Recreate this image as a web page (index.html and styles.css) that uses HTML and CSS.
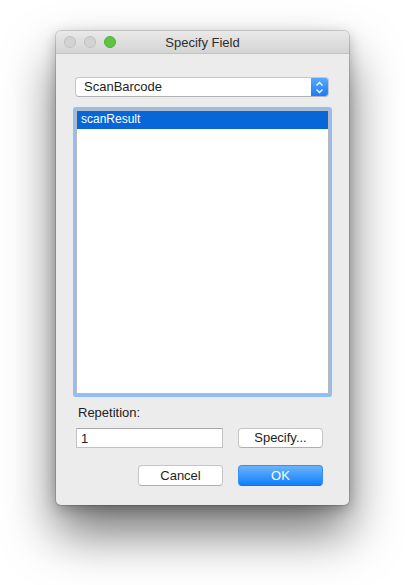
FILE: index.html
```html
<!DOCTYPE html>
<html lang="en">
<head>
    <meta charset="UTF-8">
    <title>Specify Field</title>
    <link rel="stylesheet" href="styles.css">
</head>
<body>
    <div class="window">
        <!-- Title bar with the traffic lights -->
        <div class="titlebar">
            <div class="lights">
                <span class="light"></span>
                <span class="light"></span>
                <span class="light green"></span>
            </div>
            <div class="title">Specify Field</div>
        </div>

        <div class="content">
            <div class="popup">
                <span class="popup-text">ScanBarcode</span>
                <span class="popup-arrows">
                    <svg width="9" height="13" viewBox="0 0 9 13">
                        <path d="M1.5 4.5 L4.5 1.5 L7.5 4.5 M1.5 8.5 L4.5 11.5 L7.5 8.5" fill="none" stroke="#fff" stroke-width="1.3"/>
                    </svg>
                </span>
            </div>

            <div class="list">
                <div class="row selected">scanResult</div>
            </div>

            <div class="label">Repetition:</div>
            <div class="field-row">
                <div class="text-field">1</div>
                <div class="btn">Specify...</div>
            </div>
            <div class="button-row">
                <div class="btn">Cancel</div>
                <div class="btn primary">OK</div>
            </div>
        </div>
    </div>
</body>
</html>
```
FILE: styles.css
```css
html, body {
    height: 100%;
}
body {
    margin: 0;
    padding: 31px 0 0 56px;
    box-sizing: border-box;
    background-color: #ffffff;
    font-family: 'Liberation Sans', Arial, sans-serif;
    font-size: 13px;
    color: #222;
}
.window {
    width: 293px;
    height: 474px;
    background-color: #ececec;
    border-radius: 5px;
    box-shadow: 0 0 0 1px rgba(0, 0, 0, 0.14), 0 28px 50px rgba(0, 0, 0, 0.55), 0 4px 14px rgba(0, 0, 0, 0.25);
    overflow: hidden;
    display: flex;
    flex-direction: column;
}
.titlebar {
    height: 22px;
    border-bottom: 1px solid #c4c4c4;
    background: linear-gradient(#e9e9e9, #d4d4d4);
    position: relative;
    display: flex;
    align-items: center;
    justify-content: center;
}
.lights {
    position: absolute;
    left: 8px;
    top: 5px;
    display: flex;
    gap: 8px;
}
.light {
    width: 12px;
    height: 12px;
    box-sizing: border-box;
    border-radius: 50%;
    background-color: #d3d3d3;
    border: 1px solid #c0c0c0;
}
.light.green {
    background-color: #5fc541;
    border-color: #52ad38;
}
.title {
    color: #2e2e2e;
    font-size: 13px;
}
.content {
    padding: 23px 20px 19px 20px;
    display: flex;
    flex-direction: column;
}
.popup {
    margin-left: -1px;
    width: 254px;
    height: 20px;
    box-sizing: border-box;
    display: flex;
    background-color: #fff;
    border: 1px solid #c6c6c6;
    border-bottom-color: #b2b2b2;
    border-radius: 4px;
    overflow: hidden;
}
.popup-text {
    flex: 1;
    padding-left: 8px;
    line-height: 18px;
    color: #1e1e1e;
}
.popup-arrows {
    width: 17px;
    background: linear-gradient(#5aa8fb, #1a7cfb);
    display: flex;
    align-items: center;
    justify-content: center;
}
.list {
    margin-top: 13px;
    width: 253px;
    height: 284px;
    box-sizing: border-box;
    background-color: #fff;
    border: 1px solid #b9b9b9;
    box-shadow: 0 0 0 3px #92bff3;
    border-radius: 1px;
}
.row {
    height: 18px;
    line-height: 17px;
    padding-left: 4px;
    font-size: 12px;
}
.row.selected {
    background-color: #0867d8;
    color: #fff;
}
.label {
    margin-top: 11px;
    margin-left: 2px;
    line-height: 16px;
}
.field-row, .button-row {
    display: grid;
    grid-template-columns: 147px 85px;
    column-gap: 15px;
}
.field-row {
    margin-top: 7px;
}
.button-row {
    margin-top: 17px;
    grid-template-columns: 85px 85px;
    margin-left: 62px;
}
.text-field {
    height: 20px;
    box-sizing: border-box;
    background-color: #fff;
    border: 1px solid #c2c2c2;
    border-top-color: #a9a9a9;
    padding-left: 4px;
    line-height: 19px;
}
.btn {
    height: 21px;
    box-sizing: border-box;
    background-color: #fff;
    border: 1px solid #c5c5c5;
    border-bottom-color: #afafaf;
    border-radius: 4px;
    text-align: center;
    line-height: 19px;
    color: #1e1e1e;
}
.field-row .btn {
    height: 20px;
    line-height: 18px;
}
.btn.primary {
    background: linear-gradient(#6cb3fa, #0f7ffd);
    border-color: #3a8ff5;
    border-bottom-color: #1a6fe0;
    color: #fff;
}
```
